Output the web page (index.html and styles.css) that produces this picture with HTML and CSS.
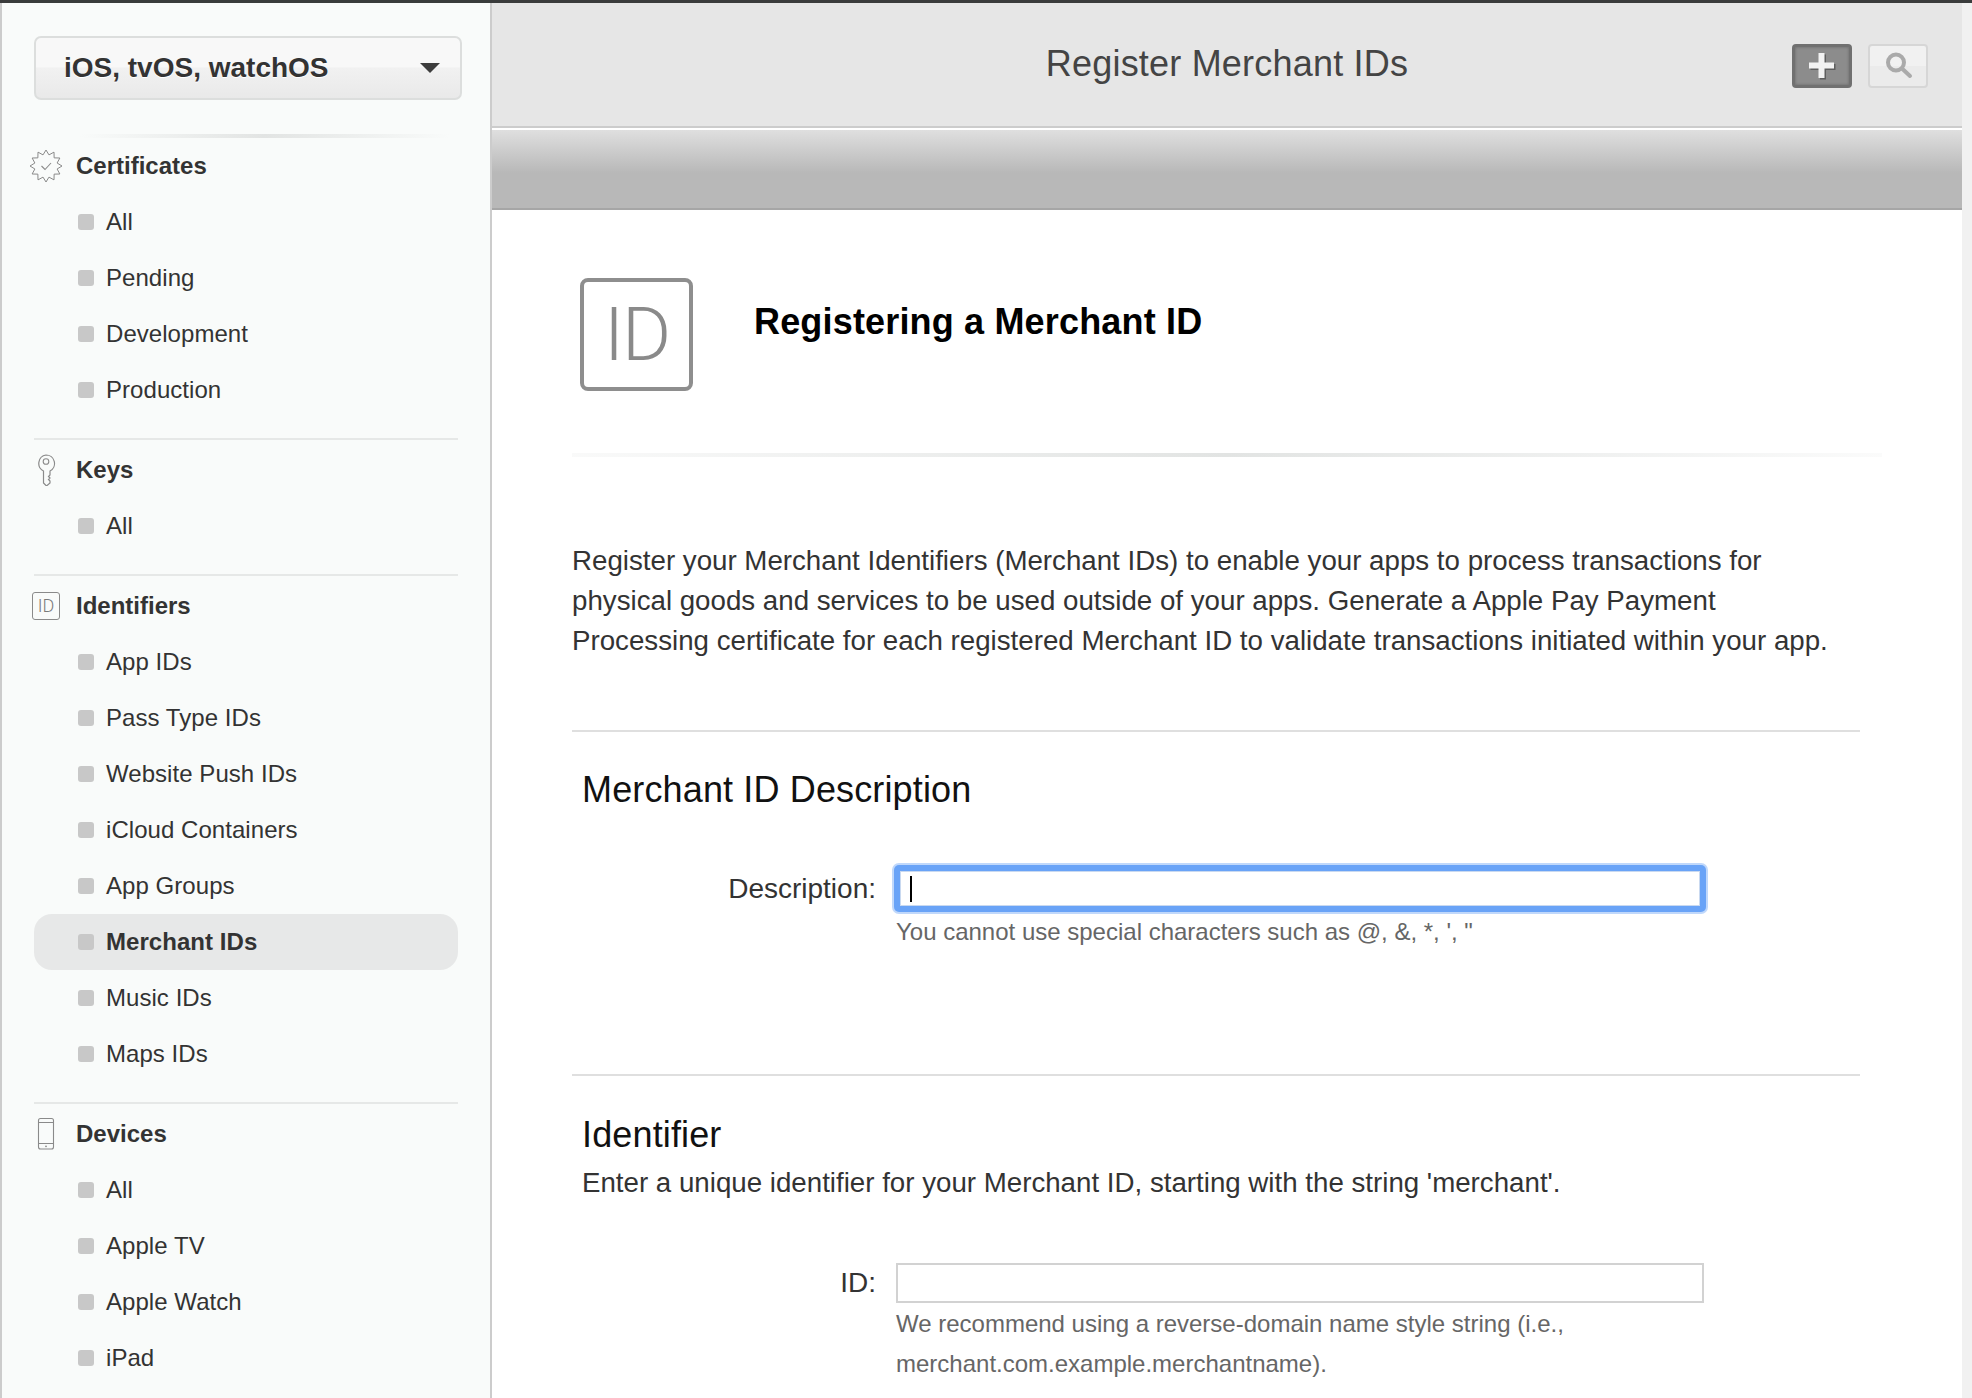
FILE: index.html
```html
<!doctype html>
<html>
<head>
<meta charset="utf-8">
<title>Register Merchant IDs</title>
<link rel="stylesheet" href="styles.css">
</head>
<body>
<div class="app">
	<aside class="sidebar">
		<div class="platform">
			<span>iOS, tvOS, watchOS</span>
			<i class="caret"></i>
		</div>
		<div class="top-rule"></div>

		<section class="group">
			<h3 class="group-head">
				<span class="group-icon">
					<svg width="34" height="34" viewBox="0 0 34 34"><polygon points="17,1 19.98,5.89 25,3.14 25.13,8.87 30.86,9 28.11,14.02 33,17 28.11,19.98 30.86,25 25.13,25.13 25,30.86 19.98,28.11 17,33 14.02,28.11 9,30.86 8.87,25.13 3.14,25 5.89,19.98 1,17 5.89,14.02 3.14,9 8.87,8.87 9,3.14 14.02,5.89" fill="none" stroke="#8a8a8a" stroke-width="1"/><path d="M12.500 17l3.500 3.500 6-6.500" fill="none" stroke="#8a8a8a" stroke-width="1.100"/></svg>
				</span>
				Certificates
			</h3>
			<ul class="items">
				<li>All</li>
				<li>Pending</li>
				<li>Development</li>
				<li>Production</li>
			</ul>
		</section>

		<section class="group">
			<h3 class="group-head">
				<span class="group-icon">
					<svg width="20" height="32" viewBox="0 0 20 32"><path d="M10 1a8.500 8.500 0 0 1 4 16v4l-1.500 1.500 1.500 1.500-1.500 1.500 1.500 1.500v2l-3.500 3-3-3V17A8.500 8.500 0 0 1 10 1z" fill="none" stroke="#8a8a8a" stroke-width="1.200"/><circle cx="10" cy="7.500" r="2.800" fill="none" stroke="#8a8a8a" stroke-width="1.100"/></svg>
				</span>
				Keys
			</h3>
			<ul class="items">
				<li>All</li>
			</ul>
		</section>

		<section class="group">
			<h3 class="group-head">
				<span class="group-icon">
					<span class="id-small">ID</span>
				</span>
				Identifiers
			</h3>
			<ul class="items">
				<li>App IDs</li>
				<li>Pass Type IDs</li>
				<li>Website Push IDs</li>
				<li>iCloud Containers</li>
				<li>App Groups</li>
				<li class="active">Merchant IDs</li>
				<li>Music IDs</li>
				<li>Maps IDs</li>
			</ul>
		</section>

		<section class="group">
			<h3 class="group-head">
				<span class="group-icon">
					<svg width="18" height="34" viewBox="0 0 18 34"><rect x="1.500" y="1.500" width="15" height="30.500" rx="2" fill="none" stroke="#8a8a8a" stroke-width="1.100"/><path d="M1.500 5.500h15M1.500 26.500h15" stroke="#8a8a8a" stroke-width="1"/><circle cx="9" cy="29.300" r=".9" fill="#8a8a8a"/></svg>
				</span>
				Devices
			</h3>
			<ul class="items">
				<li>All</li>
				<li>Apple TV</li>
				<li>Apple Watch</li>
				<li>iPad</li>
			</ul>
		</section>
	</aside>

	<main class="main">
		<header class="titlebar">
			<h1>Register Merchant IDs</h1>
			<div class="tools">
				<a class="tool tool-add">
					<svg width="27" height="27" viewBox="0 0 27 27"><path d="M9.500 0h6v9.500h9.500v6h-9.500v9.500h-6v-9.500H0v-6h9.500z" fill="#4a4a4a" transform="translate(1.500 1.500)" opacity=".7"/><path d="M9.500 0h6v9.500h9.500v6h-9.500v9.500h-6v-9.500H0v-6h9.500z" fill="#f2f2f2"/></svg>
				</a>
				<a class="tool tool-search">
					<svg width="30" height="30" viewBox="0 0 30 30"><circle cx="13" cy="11.500" r="8" fill="none" stroke="#aaa" stroke-width="4"/><path d="M19 17.500l8 7.500" stroke="#aaa" stroke-width="4" stroke-linecap="round"/></svg>
				</a>
			</div>
		</header>
		<div class="subbar"></div>

		<div class="content">
			<div class="intro">
				<div class="id-big">ID</div>
				<h2 class="intro-title">Registering a Merchant ID</h2>
			</div>
			<div class="intro-rule"></div>

			<p class="lead">Register your Merchant Identifiers (Merchant IDs) to enable your apps to process transactions for physical goods and services to be used outside of your apps. Generate a Apple Pay Payment Processing certificate for each registered Merchant ID to validate transactions initiated within your app.</p>

			<section class="block block-desc">
				<h2 class="block-title">Merchant ID Description</h2>
				<div class="field field-desc">
					<label>Description:</label>
					<div class="field-body">
						<div class="input input-focus"><i class="cursor"></i></div>
						<p class="hint hint-desc">You cannot use special characters such as @, &amp;, *, ', "</p>
					</div>
				</div>
			</section>

			<section class="block block-id">
				<h2 class="block-title">Identifier</h2>
				<p class="block-note">Enter a unique identifier for your Merchant ID, starting with the string 'merchant'.</p>
				<div class="field field-id">
					<label>ID:</label>
					<div class="field-body">
						<div class="input"></div>
						<p class="hint">We recommend using a reverse-domain name style string (i.e.,<br>merchant.com.example.merchantname).</p>
					</div>
				</div>
			</section>
		</div>
	</main>
</div>
</body>
</html>
```

FILE: styles.css
```css
*{margin:0;padding:0;list-style:none;box-sizing:border-box;}
html,body{height:1398px;overflow:hidden;}
body{background:#fff;border-top:3px solid #3a3c3c;font-family:"Liberation Sans",Arial,sans-serif;color:#333;}
.app{display:flex;height:1395px;}

/* sidebar */
.sidebar{width:492px;flex:none;background:#f9fbfa;border-left:2px solid #ccc;border-right:2px solid #ccc;padding:33px 32px 0 32px;}
.platform{display:flex;align-items:center;justify-content:space-between;height:64px;width:428px;padding:0 20px 0 28px;border:2px solid #dcdedd;border-radius:7px;background:linear-gradient(#f8f8f8 0,#f8f8f8 48%,#f1f1f1 50%,#e9e9e9 100%);font-size:28px;font-weight:bold;color:#333;text-shadow:0 1px 0 #fff;}
.caret{width:0;height:0;border-left:10px solid transparent;border-right:10px solid transparent;border-top:10px solid #3d3d3d;}
.top-rule{height:4px;margin:34px 8px 0 46px;background:linear-gradient(90deg,rgba(225,227,226,0),#e2e4e3 50%,rgba(225,227,226,0));}
.group{padding-bottom:20px;border-bottom:2px solid #e6e8e7;margin-bottom:2px;}
.group:last-child{border-bottom:0;}
.group-head{display:flex;align-items:center;height:56px;font-size:24px;font-weight:bold;color:#333;margin-left:-4px;}
.group-icon{width:40px;margin-left:-4px;margin-right:10px;display:flex;justify-content:center;align-items:center;flex:none;}
.id-small{display:block;width:28px;height:28px;border:1.500px solid #8a8a8a;border-radius:3px;font-family:Roboto,sans-serif;font-size:18px;font-weight:300;line-height:25px;text-align:center;color:#7a7a7a;}
.items li{display:flex;align-items:center;height:56px;padding-left:44px;font-size:24px;letter-spacing:.05px;color:#333;border-radius:18px;}
.items li:before{content:"";width:16px;height:16px;margin-right:12px;background:#c8c8c8;border-radius:3px;}
.items li.active{background:#e7e8e8;font-weight:bold;}

/* title bar */
.main{flex:1;display:flex;flex-direction:column;border-right:10px solid #f1f1f1;box-shadow:inset -2px 0 2px -1px #ddd;}
.titlebar{display:flex;align-items:center;justify-content:center;position:relative;height:125px;flex:none;background:#e6e6e6;border-bottom:2px solid #ccc;}
.titlebar h1{font-size:36px;letter-spacing:.2px;font-weight:normal;color:#444;margin-bottom:2px;}
.tools{position:absolute;right:34px;top:41px;display:flex;gap:16px;}
.tool{display:flex;align-items:center;justify-content:center;width:60px;height:44px;border-radius:4px;}
.tool-add{background:#8c8c8c;border:3px solid #707070;box-shadow:inset 0 0 3px #666;}
.tool-search{background:linear-gradient(#f1f1f1 50%,#ebebeb 50%);border:2px solid #d6d6d6;}
.subbar{height:82px;flex:none;border-top:2px solid #fff;border-bottom:2px solid #a6a6a6;background:linear-gradient(#dfdfdf,#b8b8b8 55%,#b8b8b8);}

/* content */
.content{flex:1;padding:0 0 0 80px;overflow:hidden;background:#fff;}
.intro{display:flex;padding:68px 0 0 8px;height:243px;}
.id-big{width:113px;height:113px;border:4px solid #8e8e8e;border-radius:8px;font-family:Roboto,sans-serif;font-size:75px;line-height:105px;text-align:center;color:#8a8a8a;letter-spacing:-2px;font-weight:300;flex:none;}
.intro-title{font-size:36px;letter-spacing:.17px;line-height:44px;color:#000;font-weight:bold;margin:22px 0 0 61px;}
.intro-rule{height:4px;width:1310px;background:linear-gradient(90deg,rgba(226,228,227,.2),#e2e4e3 50%,rgba(226,228,227,.15));}
.lead{width:1270px;margin-top:84px;font-size:27.7px;line-height:40px;color:#333;}
.block{width:1288px;border-top:2px solid #dfdfdf;padding-left:10px;}
.block-desc{margin-top:69px;height:344px;}
.block-title{font-size:36px;letter-spacing:.14px;font-weight:normal;color:#111;line-height:44px;}
.block-desc .block-title{margin-top:36px;}
.block-id .block-title{margin-top:37px;}
.block-note{font-size:27.7px;line-height:40px;color:#333;margin-top:6px;}
.field{display:flex;gap:20px;}
.field label{width:294px;text-align:right;font-size:28px;color:#333;flex:none;}
.field-desc{margin-top:55px;}
.field-desc label{line-height:43px;}
.field-id{margin-top:60px;}
.field-id label{line-height:40px;}
.field-body{width:808px;}
.input{height:40px;border:2px solid #d2d2d2;background:#fff;}
.input-focus{height:43px;display:flex;align-items:center;padding-left:10px;border:4px solid #69a3f7;border-radius:3px;box-shadow:0 0 0 2px #69a3f7,0 0 0 4px #c0d8fb,inset 0 0 0 1px #c9d9f0;}
.cursor{width:2px;height:26px;background:#000;}
.hint{font-size:24px;line-height:40px;color:#666;margin-top:1px;}
.hint-desc{margin-top:2px;}
```
